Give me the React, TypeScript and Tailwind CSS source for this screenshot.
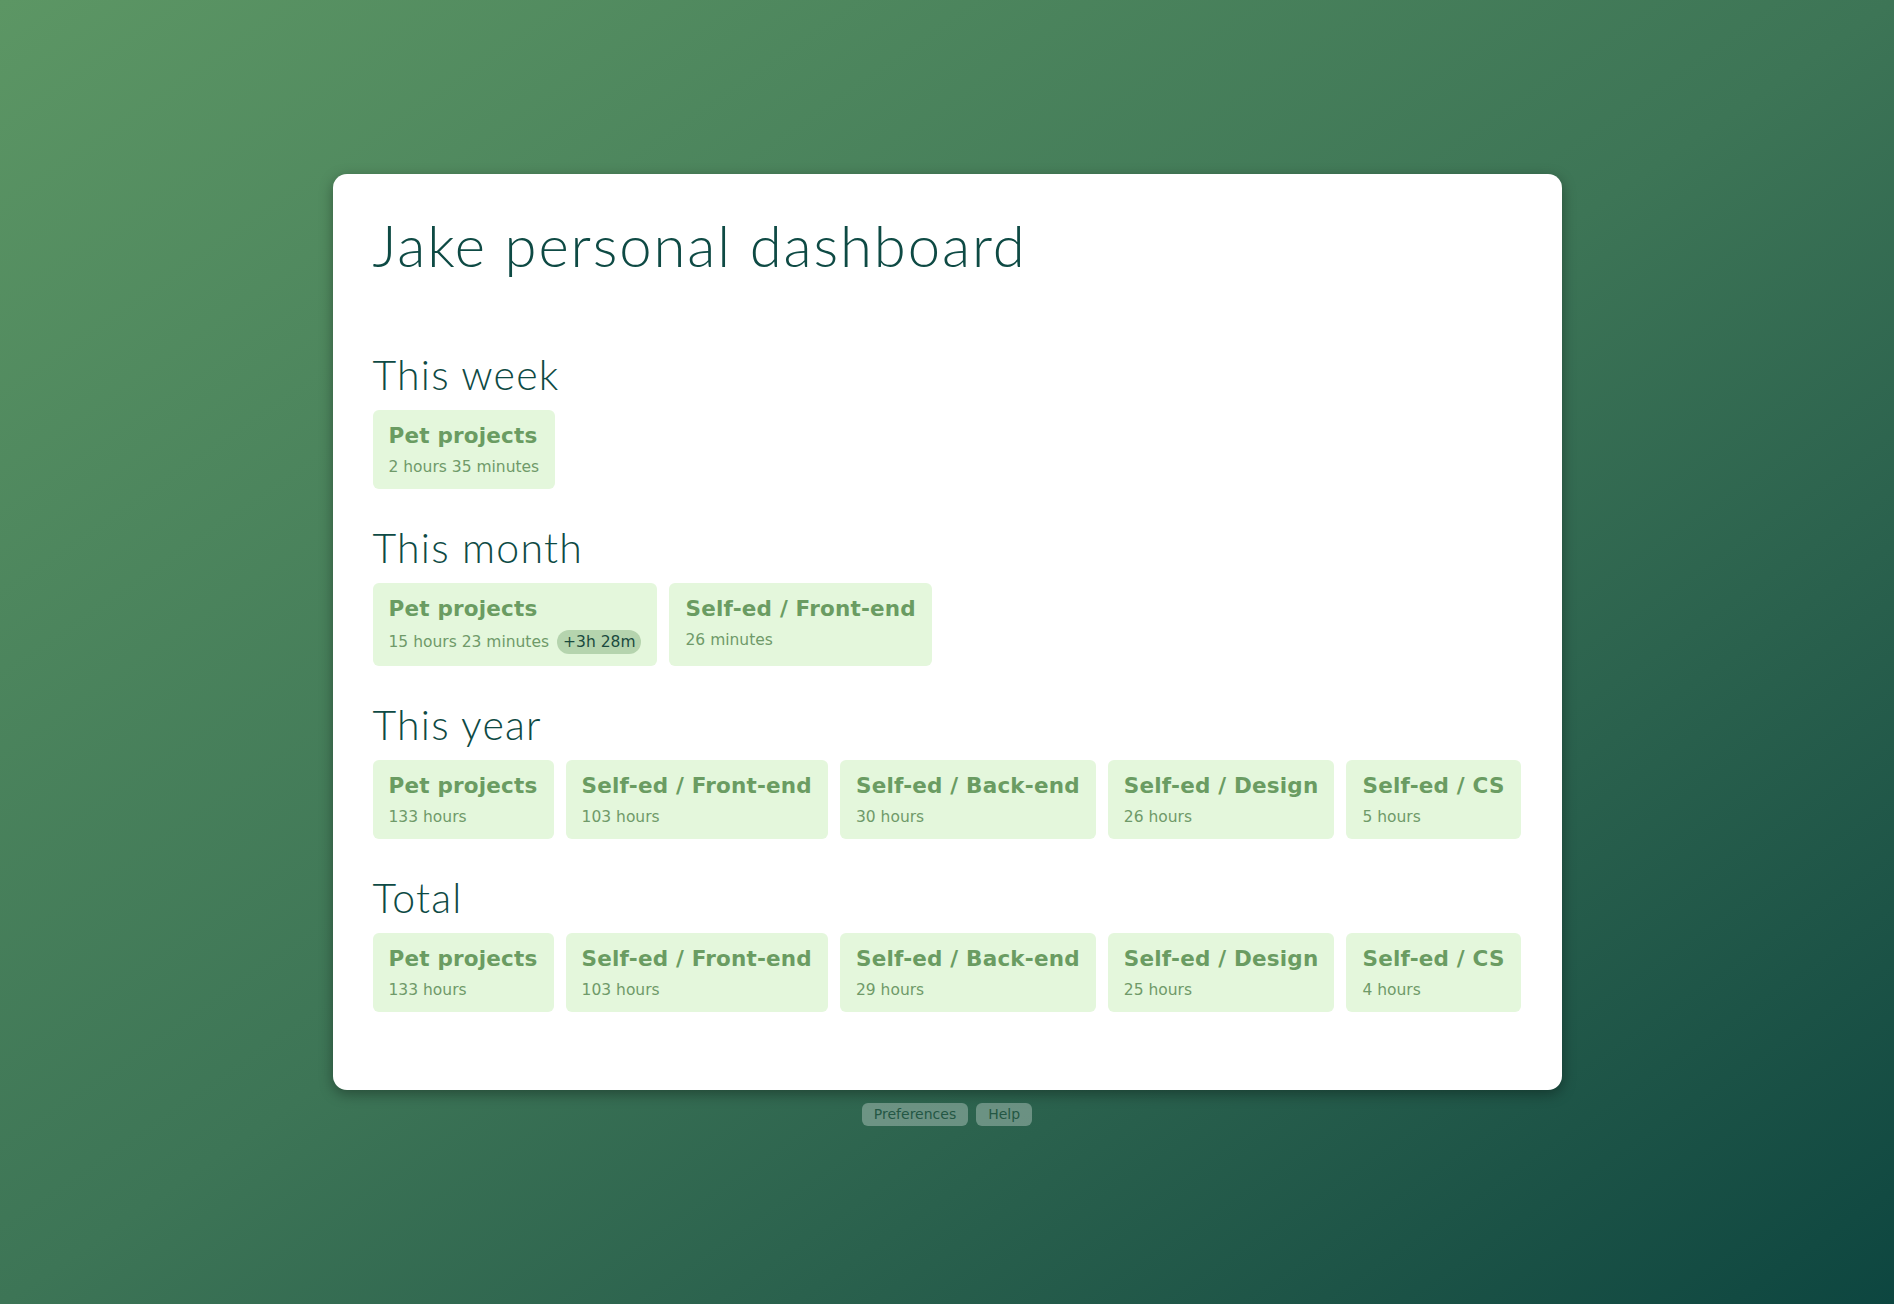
type Item = {
  name: string
  time: string
  delta?: string
}

const sections: { title: string; items: Item[] }[] = [
  {
    title: "This week",
    items: [{ name: "Pet projects", time: "2 hours 35 minutes" }],
  },
  {
    title: "This month",
    items: [
      { name: "Pet projects", time: "15 hours 23 minutes", delta: "+3h 28m" },
      { name: "Self-ed / Front-end", time: "26 minutes" },
    ],
  },
  {
    title: "This year",
    items: [
      { name: "Pet projects", time: "133 hours" },
      { name: "Self-ed / Front-end", time: "103 hours" },
      { name: "Self-ed / Back-end", time: "30 hours" },
      { name: "Self-ed / Design", time: "26 hours" },
      { name: "Self-ed / CS", time: "5 hours" },
    ],
  },
  {
    title: "Total",
    items: [
      { name: "Pet projects", time: "133 hours" },
      { name: "Self-ed / Front-end", time: "103 hours" },
      { name: "Self-ed / Back-end", time: "29 hours" },
      { name: "Self-ed / Design", time: "25 hours" },
      { name: "Self-ed / CS", time: "4 hours" },
    ],
  },
]

function Tile({ item }: { item: Item }) {
  return (
    <div className="rounded-md bg-[#e4f7dc] px-4 pb-[12px] pt-[14px]">
      <div className="font-['DejaVu_Sans',sans-serif] text-[21.5px] font-bold leading-6 tracking-[0.2px] text-[#6a9c62]">
        {item.name}
      </div>
      <div className="mt-[9px] flex items-center font-['DejaVu_Sans',sans-serif] text-[15.5px] leading-5 text-[#6f9a69]">
        <span>{item.time}</span>
        {item.delta && (
          <span className="ml-2 flex h-[24px] items-center rounded-full bg-[#b5d4ae] px-[6px] text-[#1a4a3e]">
            {item.delta}
          </span>
        )}
      </div>
    </div>
  )
}

export default function App() {
  return (
    <main className="flex min-h-screen flex-col items-center bg-gradient-to-br from-[#5c9664] via-[#3d7556] to-[#0d4640] pt-[174px]">
      <div className="w-[1229px] rounded-[14px] bg-white px-10 pb-[78px] pt-[42px] shadow-[0_4px_14px_rgba(0,0,0,0.35)]">
        <h1 className="font-['Lato',sans-serif] text-[58px] font-light leading-none tracking-[1.9px] text-[#0e4a44]">
          Jake personal dashboard
        </h1>
        <div className="mt-20 flex flex-col gap-[38px]">
          {sections.map((section) => (
            <section key={section.title}>
              <h2 className="font-['Lato',sans-serif] text-[41px] font-light leading-none tracking-[1.2px] text-[#0e4a44]">
                {section.title}
              </h2>
              <div className="mt-[15px] flex flex-wrap gap-3">
                {section.items.map((item, index) => (
                  <Tile key={index} item={item} />
                ))}
              </div>
            </section>
          ))}
        </div>
      </div>
      <div className="mt-[13px] flex gap-2 font-['DejaVu_Sans',sans-serif] text-[14px] text-[#245744]">
        <button className="h-[23px] rounded-md bg-white/30 px-3">Preferences</button>
        <button className="h-[23px] rounded-md bg-white/30 px-3">Help</button>
      </div>
    </main>
  )
}
